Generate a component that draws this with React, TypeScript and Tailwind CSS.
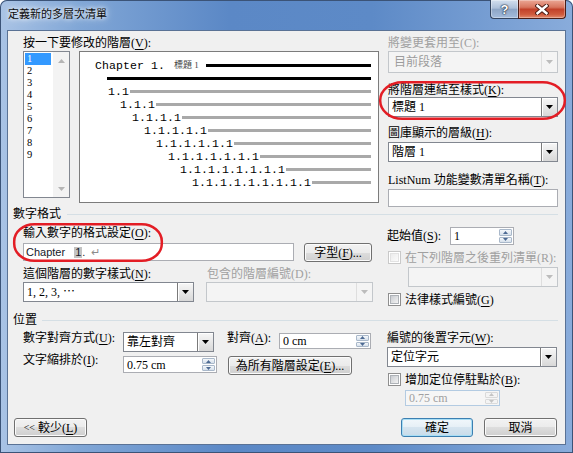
import React from "react";

const F = "font-['Liberation_Serif','Noto_Sans_CJK_TC',serif]";
const MONO = "font-['Liberation_Mono','Noto_Sans_CJK_TC',monospace]";
const SANS = "font-['Liberation_Sans','DejaVu_Sans','Noto_Sans_CJK_TC',sans-serif]";

function U({ c }: { c: string }) {
  return <span className="underline decoration-1 underline-offset-[2px]">{c}</span>;
}

function Lbl({ children, disabled = false, className = "" }: { children: React.ReactNode; disabled?: boolean; className?: string }) {
  return (
    <div className={`h-[14px] leading-[14px] text-[12px] whitespace-nowrap ${disabled ? "text-[#a0a0a0]" : "text-black"} ${className}`}>
      {children}
    </div>
  );
}

function Tri({ color = "#000", up = false, w = 7, h = 4 }: { color?: string; up?: boolean; w?: number; h?: number }) {
  const d = up ? `M0 ${h}H${w}L${w / 2} 0Z` : `M0 0H${w}L${w / 2} ${h}Z`;
  return (
    <svg width={w} height={h} viewBox={`0 0 ${w} ${h}`}>
      <path d={d} fill={color} />
    </svg>
  );
}

function Combo({ text, className = "", disabled = false }: { text?: React.ReactNode; className?: string; disabled?: boolean }) {
  return (
    <div className={`flex ${disabled ? "border border-[#c3c7cb] bg-[#f4f4f4]" : "border border-[#828790] bg-white"} ${className}`}>
      <div className={`flex-1 pl-[3px] flex items-center text-[12px] leading-none whitespace-nowrap ${disabled ? "text-[#9c9c9c]" : "text-black"}`}>{text}</div>
      {disabled ? (
        <div className="w-[16px] border-l border-[#dedede] flex items-center justify-center">
          <Tri color="#bcbcbc" />
        </div>
      ) : (
        <div className="w-[16px] border-l border-[#7a7a7a] bg-[linear-gradient(to_bottom,#f7f7f7,#d8d8d8)] shadow-[inset_1px_1px_0_#ffffff] flex items-center justify-center">
          <Tri />
        </div>
      )}
    </div>
  );
}

function SpinBtns({ disabled = false }: { disabled?: boolean }) {
  const half = disabled
    ? "border-[#dadada] bg-[#f4f4f4]"
    : "border-[#a9b8ca] bg-[linear-gradient(to_bottom,#f5f8fb,#d6e0eb)]";
  const c = disabled ? "#c4c4c4" : "#4d6a93";
  return (
    <div className="w-[15px] flex flex-col gap-[1px] p-[1px]">
      <div className={`flex-1 rounded-[1px] border ${half} flex items-center justify-center`}>
        <Tri up w={5} h={3} color={c} />
      </div>
      <div className={`flex-1 rounded-[1px] border ${half} flex items-center justify-center`}>
        <Tri w={5} h={3} color={c} />
      </div>
    </div>
  );
}

function Spin({ value, className = "", disabled = false }: { value: string; className?: string; disabled?: boolean }) {
  return (
    <div className={`flex border ${disabled ? "border-[#b3cbe2] bg-[#f6f6f6]" : "border-[#abadb3] bg-white"} ${className}`}>
      <div className={`flex-1 pl-[3px] flex items-center text-[12px] leading-none whitespace-nowrap ${disabled ? "text-[#a0a0a0]" : "text-black"}`}>{value}</div>
      <SpinBtns disabled={disabled} />
    </div>
  );
}

function Check({ disabled = false }: { disabled?: boolean }) {
  return (
    <div className={`w-[13px] h-[13px] shrink-0 border p-[1px] bg-white ${disabled ? "border-[#c9c9c9]" : "border-[#8f8f8f]"}`}>
      <div
        className={`w-full h-full border ${
          disabled
            ? "border-[#e2e2e2] bg-[linear-gradient(135deg,#ececec,#fbfbfb)]"
            : "border-[#aeb2b7] bg-[linear-gradient(135deg,#c9ccd1,#f3f3f3)]"
        }`}
      />
    </div>
  );
}

function Btn({ children, className = "", def = false }: { children: React.ReactNode; className?: string; def?: boolean }) {
  return (
    <div
      className={`rounded-[3px] border flex items-center justify-center text-[12px] leading-none text-black whitespace-nowrap ${
        def
          ? "border-[#3c7fb1] bg-[linear-gradient(to_bottom,#f1f7fb_0%,#e5eff6_50%,#d5e4ef_50%,#c8dbe9_100%)] shadow-[inset_0_0_0_1px_#a8def5]"
          : "border-[#707070] bg-[linear-gradient(to_bottom,#f2f2f2_0%,#ebebeb_50%,#dddddd_50%,#cfcfcf_100%)] shadow-[inset_0_0_0_1px_#fbfbfb]"
      } ${className}`}
    >
      {children}
    </div>
  );
}

const rows = [
  { t: "1.1", pl: "pl-[28px]", w: "w-[22px]" },
  { t: "1.1.1", pl: "pl-[40px]", w: "w-[36px]" },
  { t: "1.1.1.1", pl: "pl-[52px]", w: "w-[50px]" },
  { t: "1.1.1.1.1", pl: "pl-[64px]", w: "w-[64px]" },
  { t: "1.1.1.1.1.1", pl: "pl-[76px]", w: "w-[78px]" },
  { t: "1.1.1.1.1.1.1", pl: "pl-[88px]", w: "w-[92px]" },
  { t: "1.1.1.1.1.1.1.1", pl: "pl-[100px]", w: "w-[106px]" },
  { t: "1.1.1.1.1.1.1.1.1", pl: "pl-[112px]", w: "w-[120px]" },
];

function Preview() {
  return (
    <div className="ml-[9px] w-[300px] h-[152px] border border-[#7c7c7c] bg-white pt-[7px] pr-[7px] flex flex-col">
      <div className="h-[13px] flex items-center pl-[15px]">
        <span className={`w-[79px] shrink-0 text-[11.5px] leading-[13px] tracking-[0.1px] whitespace-nowrap ${MONO}`}>Chapter 1.</span>
        <span className="w-[32px] shrink-0 text-[9px] leading-[13px] text-[#444] whitespace-nowrap">標題 1</span>
        <div className="flex-1 h-[3px] bg-black" />
      </div>
      <div className="h-[13px] flex items-center pl-[27px]">
        <div className="flex-1 h-[3px] bg-black" />
      </div>
      {rows.map((r) => (
        <div key={r.t} className={`h-[13px] flex items-center ${r.pl}`}>
          <span className={`${r.w} shrink-0 text-[11.5px] leading-[13px] tracking-[0.1px] whitespace-nowrap ${MONO}`}>{r.t}</span>
          <div className="flex-1 h-[3px] bg-[#a9a9a9]" />
        </div>
      ))}
    </div>
  );
}

function ListBox() {
  const items = ["1", "2", "3", "4", "5", "6", "7", "8", "9"];
  return (
    <div className="w-[47px] h-[147px] shrink-0 border border-[#828790] bg-white flex">
      <div className="w-[29px] pt-[1px] pl-[1px]">
        {items.map((it, i) => (
          <div
            key={it}
            className={`h-[12px] leading-[12px] text-[10.5px] pl-[2px] w-[26px] ${i === 0 ? "bg-[#3399ff] text-white" : "text-black"}`}
          >
            {it}
          </div>
        ))}
      </div>
      <div className="ml-auto w-[16px] h-full bg-[#f3f3f3] flex flex-col justify-between">
        <div className="h-[17px] flex items-center justify-center">
          <Tri up w={7} h={4} color="#b5b5b5" />
        </div>
        <div className="h-[17px] flex items-center justify-center">
          <Tri w={7} h={4} color="#b5b5b5" />
        </div>
      </div>
    </div>
  );
}

function Section({ title, lineMl }: { title: string; lineMl: string }) {
  return (
    <div className="h-[14px] flex items-center pl-[5px] pr-[7px] shrink-0">
      <span className="text-[12px] leading-[14px] text-black whitespace-nowrap">{title}</span>
      <div className={`flex-1 h-px bg-[#d5dfe5] ${lineMl}`} />
    </div>
  );
}

export default function App() {
  return (
    <div className={`relative w-[573px] h-[453px] overflow-hidden bg-white ${F}`}>
      <div className="w-[573px] h-[453px] rounded-t-[7px] bg-[linear-gradient(90deg,#a9c3e5_0%,#80a6d6_14%,#5b88c6_40%,#5d8ac7_65%,#89acdb_100%)] shadow-[inset_0_0_0_1px_#3b5377] flex flex-col">
        {/* title bar */}
        <div className="h-[30px] shrink-0 flex items-start">
          <div className="pl-[8px] pt-[7px] text-[11px] leading-[14px] text-[#0c0c0c] whitespace-nowrap [text-shadow:0_0_4px_#ffffff,0_0_8px_rgba(255,255,255,0.85)]">
            定義新的多層次清單
          </div>
          <div className="ml-auto mr-[7px] flex">
            <div className="w-[28px] h-[19px] rounded-bl-[4px] border border-t-0 border-r-0 border-[#34455f] bg-[linear-gradient(to_bottom,#d3dfee_0%,#adc0d9_45%,#8ea6c6_52%,#a4bcdc_100%)] shadow-[inset_0_0_0_1px_rgba(255,255,255,0.35)] flex items-center justify-center">
              <span className={`text-[13px] leading-none font-bold text-white ${SANS} [text-shadow:0_0_1px_#1e2a3c,0_0_1px_#1e2a3c,0_0_2px_#1e2a3c]`}>?</span>
            </div>
            <div className="w-[48px] h-[19px] rounded-br-[4px] border border-t-0 border-[#4b1d16] bg-[linear-gradient(to_bottom,#eba795_0%,#d8765f_40%,#c2412a_52%,#cf5a3d_80%,#e28b6f_100%)] shadow-[inset_0_0_0_1px_rgba(255,255,255,0.3)] flex items-center justify-center">
              <svg width="14" height="11" viewBox="0 0 14 11">
                <path d="M2.5 1.8L11.5 9.2M11.5 1.8L2.5 9.2" stroke="#4a1a12" strokeWidth="4.4" strokeLinecap="square" />
                <path d="M2.5 1.8L11.5 9.2M11.5 1.8L2.5 9.2" stroke="#ffffff" strokeWidth="2.4" strokeLinecap="square" />
              </svg>
            </div>
          </div>
        </div>

        {/* client area */}
        <div className="mx-[7px] h-[415px] shrink-0 border border-[#5a7295] bg-[#f0f0f0] flex flex-col">
          {/* top area */}
          <div className="flex pl-[15px] pt-[5px] shrink-0">
            <div className="w-[356px] flex flex-col">
              <Lbl>
                按一下要修改的階層(<U c="V" />):
              </Lbl>
              <div className="flex mt-[1px]">
                <ListBox />
                <Preview />
              </div>
            </div>
            <div className="ml-[9px] w-[170px] flex flex-col">
              <Lbl disabled>將變更套用至(C):</Lbl>
              <Combo disabled text={<span className="pl-[2px]">目前段落</span>} className="mt-[1px] h-[22px]" />
              <Lbl className="mt-[10px]">
                將階層連結至樣式(<U c="K" />):
              </Lbl>
              <Combo text="標題 1" className="h-[20px]" />
              <Lbl className="mt-[9px]">
                圖庫顯示的層級(<U c="H" />):
              </Lbl>
              <Combo text="階層 1" className="mt-[2px] h-[20px]" />
              <Lbl className="mt-[11px]">
                ListNum 功能變數清單名稱(<U c="T" />):
              </Lbl>
              <div className="mt-[2px] h-[18px] border border-[#abadb3] bg-white" />
            </div>
          </div>

          <Section title="數字格式" lineMl="ml-[6px]" />

          {/* number format block */}
          <div className="flex pl-[15px] shrink-0">
            <div className="w-[350px] flex flex-col">
              <Lbl className="mt-[5px]">
                輸入數字的格式設定(<U c="O" />):
              </Lbl>
              <div className="flex items-start mt-[3px]">
                <div className={`w-[271px] h-[18px] border border-[#abadb3] bg-white flex items-center pl-[2px] text-[11px] leading-none ${SANS}`}>
                  <span className="text-[#15192a]">Chapter</span>
                  <span className="ml-[9px] bg-[#c3c3c3] px-[1px] text-[#15192a]">1</span>
                  <span className="text-[#15192a]">.</span>
                  <span className="ml-[6px] text-[#8c8c8c]">↵</span>
                </div>
                <Btn className="ml-[10px] w-[68px] h-[19px]">
                  字型(<U c="F" />)...
                </Btn>
              </div>
              <div className="flex mt-[5px]">
                <div className="w-[171px] flex flex-col">
                  <Lbl>
                    這個階層的數字樣式(<U c="N" />):
                  </Lbl>
                  <Combo text="1, 2, 3, ⋯" className="mt-[1px] h-[20px]" />
                </div>
                <div className="ml-[12px] w-[167px] flex flex-col">
                  <Lbl disabled className="ml-[1px]">包含的階層編號(D):</Lbl>
                  <Combo disabled className="mt-[1px] h-[20px]" />
                </div>
              </div>
            </div>
            <div className="ml-[14px] w-[171px] flex flex-col">
              <div className="mt-[6px] h-[18px] flex items-center">
                <Lbl className="w-[63px]">
                  起始值(<U c="S" />):
                </Lbl>
                <Spin value="1" className="w-[64px] h-[18px]" />
              </div>
              <div className="mt-[6px] h-[13px] flex items-center">
                <div className="ml-[1px]">
                  <Check disabled />
                </div>
                <Lbl disabled className="ml-[4px]">在下列階層之後重列清單(R):</Lbl>
              </div>
              <Combo disabled className="mt-[3px] ml-[21px] w-[150px] h-[20px]" />
              <div className="mt-[6px] h-[13px] flex items-center">
                <div className="ml-[1px]">
                  <Check />
                </div>
                <Lbl className="ml-[4px]">
                  法律樣式編號(<U c="G" />)
                </Lbl>
              </div>
            </div>
          </div>

          <div className="mt-[7px]">
            <Section title="位置" lineMl="ml-[5px]" />
          </div>

          {/* position block */}
          <div className="flex pl-[15px] shrink-0">
            <div className="w-[350px] flex flex-col">
              <div className="flex items-start mt-[5px]">
                <Lbl className="w-[100px] -mt-[1px]">
                  數字對齊方式(<U c="U" />):
                </Lbl>
                <Combo text="靠左對齊" className="w-[91px] h-[20px]" />
                <Lbl className="ml-[13px] w-[52px] -mt-[1px]">
                  對齊(<U c="A" />):
                </Lbl>
                <Spin value="0 cm" className="w-[92px] h-[16px] mt-[1px]" />
              </div>
              <div className="flex items-start mt-[4px]">
                <Lbl className="w-[100px] -mt-[3px]">
                  文字縮排於(<U c="I" />):
                </Lbl>
                <Spin value="0.75 cm" className="w-[94px] h-[17px]" />
                <Btn className="ml-[11px] w-[124px] h-[19px]">
                  為所有階層設定(<U c="E" />)...
                </Btn>
              </div>
            </div>
            <div className="ml-[14px] w-[171px] flex flex-col">
              <Lbl className="mt-[4px]">
                編號的後置字元(<U c="W" />):
              </Lbl>
              <Combo text="定位字元" className="mt-[2px] w-[170px] h-[20px]" />
              <div className="mt-[6px] h-[13px] flex items-center">
                <div className="ml-[1px]">
                  <Check />
                </div>
                <Lbl className="ml-[4px]">
                  增加定位停駐點於(<U c="B" />):
                </Lbl>
              </div>
              <Spin disabled value="0.75 cm" className="mt-[4px] ml-[18px] w-[95px] h-[16px]" />
            </div>
          </div>

          {/* bottom buttons */}
          <div className="mt-auto flex items-end pl-[6px] pr-[8px] pb-[7px]">
            <Btn className="w-[73px] h-[19px]">
              <span className="text-[10px] mr-[3px]">&lt;&lt;</span>較少(<U c="L" />)
            </Btn>
            <Btn def className="ml-auto w-[72px] h-[19px]">
              確定
            </Btn>
            <Btn className="ml-[11px] w-[73px] h-[19px]">取消</Btn>
          </div>
        </div>
      </div>

      {/* red annotation marks */}
      <svg className="absolute inset-0 pointer-events-none" width="573" height="453" viewBox="0 0 573 453">
        <rect x="380.2" y="82.2" width="184.6" height="36.6" rx="22" ry="18" fill="none" stroke="#e31d25" strokeWidth="2.5" />
        <rect x="14.2" y="224.2" width="147.6" height="36.6" rx="20" ry="17" fill="none" stroke="#e31d25" strokeWidth="2.5" />
      </svg>
    </div>
  );
}
